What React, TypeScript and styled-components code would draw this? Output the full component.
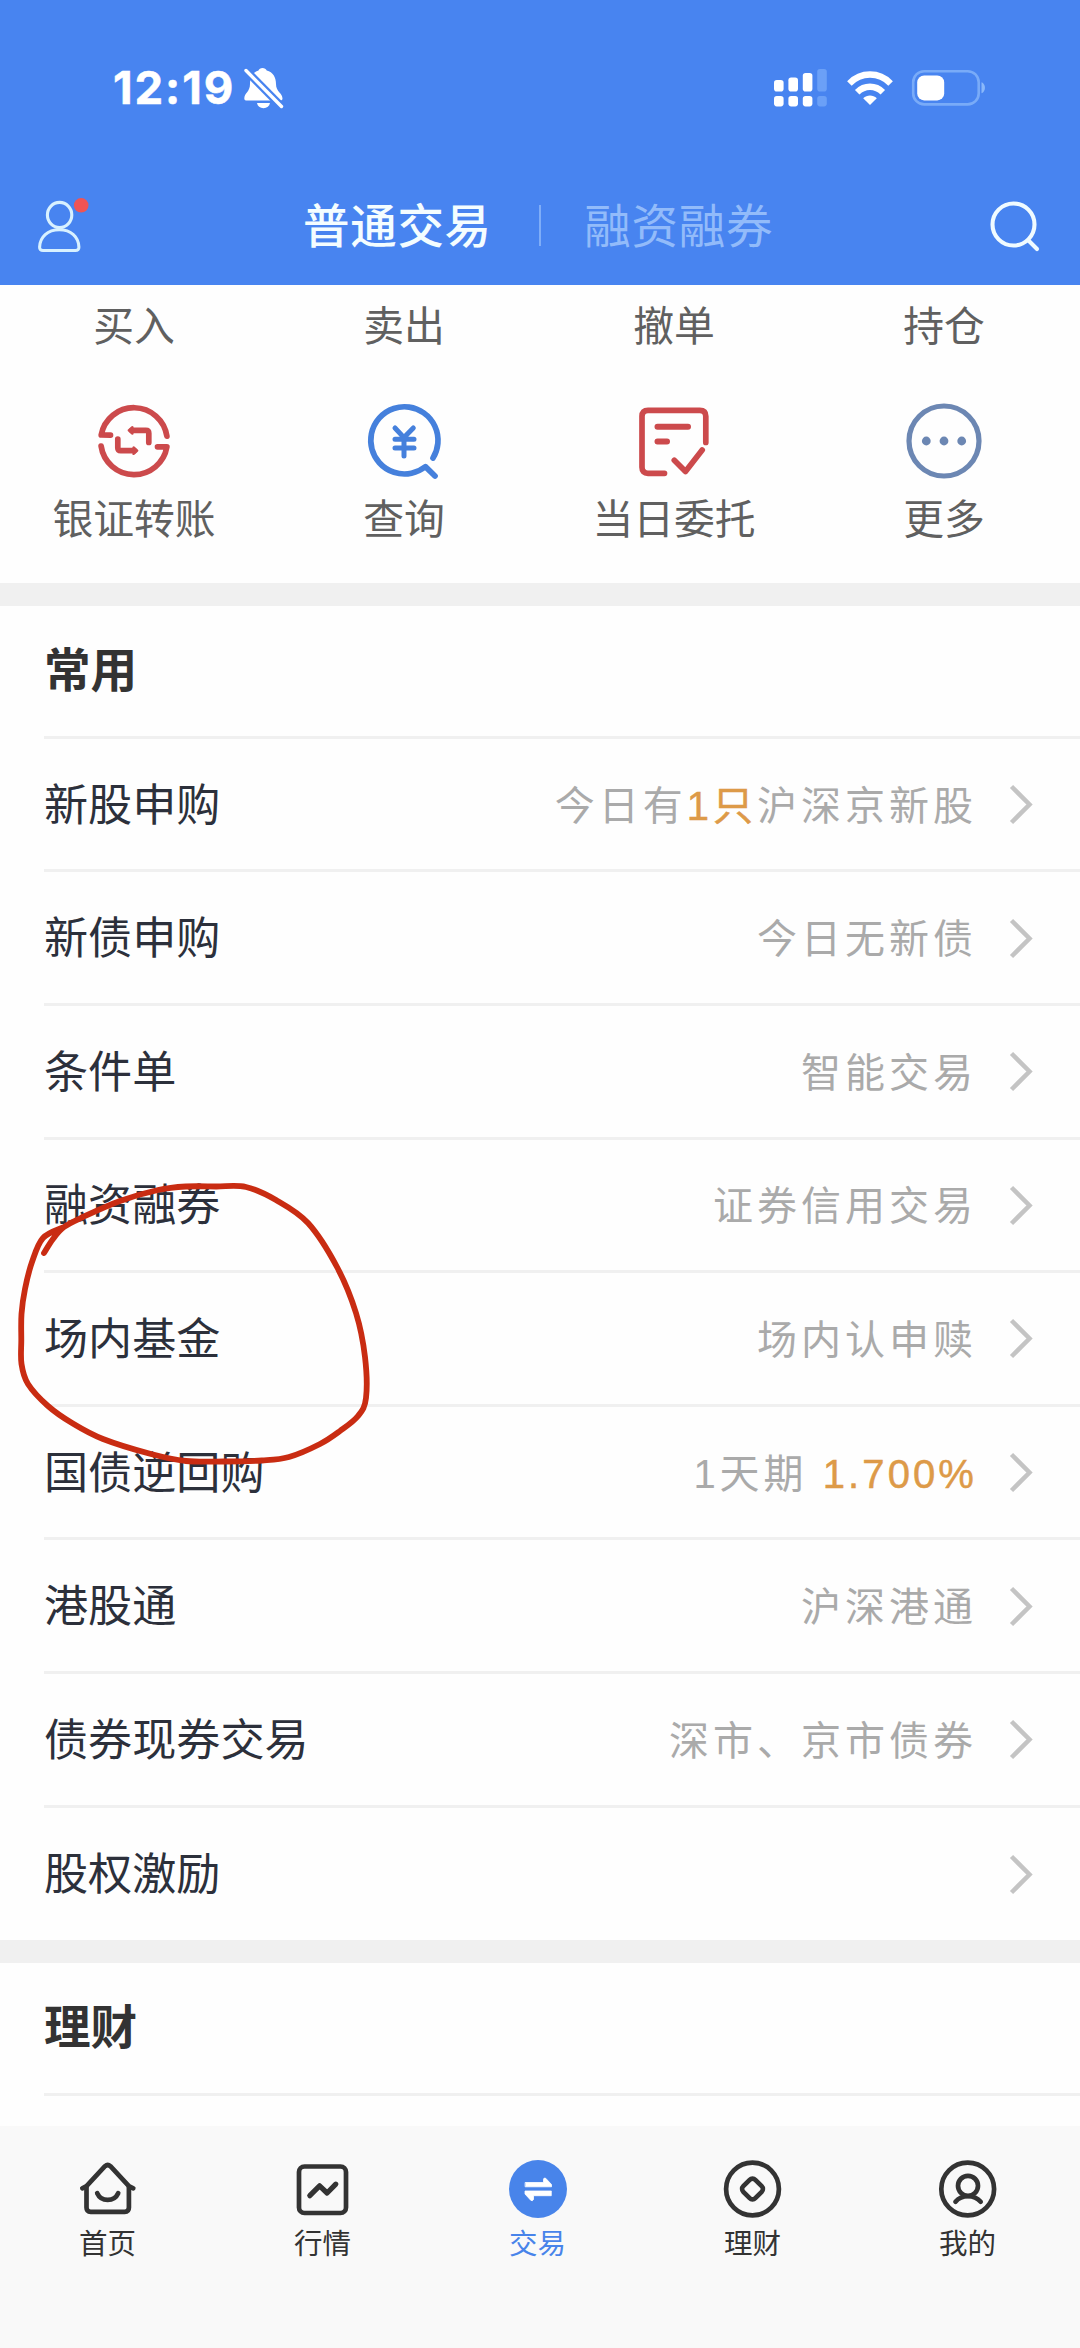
import React from 'react';
import styled, { createGlobalStyle } from 'styled-components';

const Global = createGlobalStyle`
  * { box-sizing: border-box; }
  html, body { margin: 0; padding: 0; background: #fefefe; }
  body {
    font-family: "Liberation Sans", "Noto Sans CJK SC", sans-serif;
    -webkit-font-smoothing: antialiased;
  }
  svg { display: block; flex: none; overflow: visible; }
`;

const Screen = styled.div`
  position: relative;
  width: 1080px;
  height: 2348px;
  display: flex;
  flex-direction: column;
  overflow: hidden;
  background: #fefefe;
`;

const Header = styled.header`
  height: 285px;
  flex: none;
  background: #4884f0;
  color: #fff;
`;

const StatusBar = styled.div`
  height: 168px;
  padding: 8px 95px 0 113px;
  display: flex;
  align-items: center;
  justify-content: space-between;
`;

const StatusGroup = styled.div<{ $gap: number }>`
  display: flex;
  align-items: center;
  gap: ${(p) => p.$gap}px;
`;

const Clock = styled.span`
  width: 121px;
  font-family: Inter, sans-serif;
  font-size: 45.5px;
  font-weight: 700;
  line-height: 54px;
  letter-spacing: 1.9px;
  white-space: nowrap;
  -webkit-text-stroke: 0.5px #fff;
`;

const NavBar = styled.div`
  height: 117px;
  padding: 0 39px 2px 37px;
  display: grid;
  grid-template-columns: 266px 1fr 50px;
  align-items: center;
`;

const Tabs = styled.nav`
  display: flex;
  align-items: center;
`;

const Tab = styled.span<{ $active?: boolean }>`
  font-size: 46.5px;
  line-height: 60px;
  padding-top: 2px;
  letter-spacing: 0.7px;
  font-weight: ${(p) => (p.$active ? 500 : 400)};
  color: ${(p) => (p.$active ? '#f4fdff' : '#92bbfa')};
`;

const TabDivider = styled.i`
  width: 2px;
  height: 41px;
  margin: 0 43px 0 47.5px;
  background: #7fadf8;
`;

const ShortcutGrid = styled.section`
  height: 298px;
  flex: none;
  padding-top: 13px;
  margin-left: -1px;
  display: grid;
  grid-template-columns: repeat(4, 270px);
  grid-template-rows: 58px 1fr;
`;

const Shortcut = styled.div<{ $padTop: number }>`
  padding-top: ${(p) => p.$padTop}px;
  display: flex;
  flex-direction: column;
  align-items: center;
  gap: 12px;
`;

const ShortcutLabel = styled.span`
  font-size: 40.8px;
  line-height: 58px;
  color: #606060;
`;

const SectionGap = styled.div`
  height: 23px;
  flex: none;
  background: #f0f0f0;
`;

const Section = styled.section`
  flex: none;
  padding-left: 44px;
`;

const SectionTitle = styled.h2`
  margin: 0;
  height: 132.8px;
  font-size: 46.6px;
  line-height: 131px;
  font-weight: 700;
  color: #333;
  border-bottom: 3px solid #f0f0f0;
`;

const Row = styled.div<{ $last?: boolean }>`
  height: ${(p) => (p.$last ? 132.8 : 133.6)}px;
  padding-right: 47px;
  display: flex;
  align-items: center;
  border-bottom: ${(p) => (p.$last ? 'none' : '3px solid #f0f0f0')};
`;

const RowTitle = styled.span`
  flex: 1;
  padding-top: 3px;
  font-size: 44.1px;
  line-height: 64px;
  color: #2c303b;
`;

const RowNote = styled.span`
  padding-top: 3px;
  font-size: 40px;
  line-height: 64px;
  letter-spacing: 4px;
  margin-right: 32px;
  color: #aaa;
  white-space: pre;
`;

const Accent = styled.em<{ $tight?: boolean }>`
  font-style: normal;
  letter-spacing: ${(p) => (p.$tight ? 3.1 : 4)}px;
  color: #dd9a48;
  -webkit-text-stroke: 0.5px #dd9a48;
`;

const Filler = styled.div`
  flex: 1;
`;

const TabBar = styled.footer`
  height: 222px;
  flex: none;
  padding-top: 33px;
  background: #f9f9f9;
  display: grid;
  grid-template-columns: repeat(5, 215px);
  align-items: start;
`;

const TabItem = styled.div<{ $active?: boolean }>`
  display: flex;
  flex-direction: column;
  align-items: center;
  gap: 5px;
  color: ${(p) => (p.$active ? '#4884ea' : '#333')};
`;

const TabLabel = styled.span`
  font-size: 28.5px;
  line-height: 40px;
`;

const MarkerLayer = styled.svg`
  position: absolute;
  left: 0;
  top: 1170px;
  pointer-events: none;
`;

const BellOff = () => (
  <svg width="40" height="42" viewBox="0 0 40 42">
    <path d="M18.500 1c2 0 3.600 1 4.200 2.400C29 5 32 10 32 17c0 8 6.500 9 6.500 14.500 0 1.500-1 2-2.500 2H3c-1.800 0-2.700-.6-2.700-2C.3 26 6 25 6 17 6 10 9 5 14.500 3.400 15 2 16.500 1 18.500 1z" fill="#fff" />
    <path d="M13 36h13c-.6 3.400-3 5.200-6.500 5.200S13.600 39.400 13 36z" fill="#fff" />
    <path d="M0 1.500L39 41" stroke="#4884f0" strokeWidth="8" />
    <path d="M2 3.500L37.500 39.500" stroke="#fff" strokeWidth="3.400" strokeLinecap="round" />
  </svg>
);

const bars = [
  { x: 0, y: 11, on: true },
  { x: 14.4, y: 8.5, on: true },
  { x: 28.8, y: 4, on: true },
  { x: 43.2, y: 0, on: false },
];

const Signal = () => (
  <svg width="53" height="38" viewBox="0 0 53 38">
    {bars.map((b) => (
      <g key={b.x} fill={b.on ? '#fff' : '#6ba0f7'}>
        <rect x={b.x} y={b.y} width="9.600" height={22.6 - b.y} rx="2.800" />
        <rect x={b.x} y="27" width="9.600" height="10.400" rx="2.800" />
      </g>
    ))}
  </svg>
);

const Wifi = () => (
  <svg width="46" height="34" viewBox="0 0 46 34">
    <g fill="none" stroke="#fff" strokeWidth="6.400">
      <path d="M2.400 12.400C14 .6 32 .6 43.600 12.400" />
      <path d="M10.200 21.200C17.500 13.900 28.500 13.900 35.800 21.200" />
    </g>
    <path d="M16.200 27.300c4-3.700 9.600-3.700 13.600 0L23 34z" fill="#fff" />
  </svg>
);

const Battery = () => (
  <svg width="73" height="36" viewBox="0 0 73 36">
    <rect x="1.200" y="1.200" width="65.500" height="33.200" rx="11" fill="none" stroke="#79abf8" strokeWidth="2.600" />
    <rect x="5.200" y="5.400" width="27" height="25" rx="7" fill="#fff" />
    <path d="M69.500 12.200c4.600 1.600 4.600 9.400 0 11z" fill="#8ab8fa" />
  </svg>
);

const Profile = () => (
  <svg width="50" height="56" viewBox="0 0 50 56">
    <g fill="none" stroke="#d8f1ff" strokeWidth="3.100">
      <ellipse cx="22.600" cy="17" rx="12.200" ry="12.600" />
      <path d="M6 52.500h32.500c2.200 0 3.500-1.200 3.400-3.400C41.600 39 34 31.800 22.300 31.800S3 39 2.600 49.100c-.1 2.200 1.200 3.400 3.400 3.400z" />
    </g>
    <circle cx="44.200" cy="7.300" r="7.300" fill="#f05454" />
  </svg>
);

const Search = () => (
  <svg width="50" height="50" viewBox="0 0 50 50">
    <g fill="none" stroke="#f0fbff" strokeWidth="4.100" strokeLinecap="round">
      <circle cx="22.500" cy="23.500" r="21" />
      <path d="M37.500 39.500L46 48" />
    </g>
  </svg>
);

const lineIcon = {
  width: 76,
  height: 76,
  viewBox: '0 0 76 76',
  fill: 'none',
  strokeWidth: 5.7,
  strokeLinecap: 'round' as const,
  strokeLinejoin: 'round' as const,
};

const Transfer = () => (
  <svg {...lineIcon} stroke="#cc4a4c">
    <path d="M14.500 32.200L5.200 32A33.300 33.300 0 0 1 70.900 33.200" />
    <path d="M61.500 43.800L70.900 43.800A33.300 33.300 0 0 1 5.100 43" />
    <path d="M52.800 39.500V30.300Q52.800 27.400 49.800 27.400H36" />
    <path d="M21.800 36V44.800Q21.800 47.700 24.800 47.700H38" />
    <path d="M32.800 27.400L36.400 24.200V30.600zM41.200 47.700L37.600 44.500V50.900z" fill="#cc4a4c" strokeWidth="2.400" />
  </svg>
);

const Query = () => (
  <svg {...lineIcon} stroke="#4580dc">
    <path d="M67 55A33.600 33.600 0 1 0 59.400 63.600L69 73" />
    <path d="M29 25L38 34.600L47.300 25M38 34.600V53M29 36.200H48M29 45H48" strokeWidth="5" />
  </svg>
);

const Orders = () => (
  <svg {...lineIcon} stroke="#cc4a4c">
    <path d="M28.500 70.300H12Q6 70.300 6 64.300V13.300Q6 7.300 12 7.300H63.800Q69.800 7.300 69.800 13.300V39.500" />
    <path d="M21.500 23.700H52M21.500 38.500H31" strokeWidth="6" />
    <path d="M38.300 57.200L49.500 68.500L66.200 47" />
  </svg>
);

const More = () => (
  <svg {...lineIcon} stroke="#6c87b3">
    <circle cx="38" cy="38" r="35" strokeWidth="5.200" />
    <g fill="#6c87b3" stroke="none">
      <circle cx="20.300" cy="38" r="4.400" />
      <circle cx="38" cy="38" r="4.400" />
      <circle cx="55.700" cy="38" r="4.400" />
    </g>
  </svg>
);

const Chevron = () => (
  <svg width="24" height="40" viewBox="0 0 24 40">
    <path d="M2.500 2.500L20.500 20.500L2.500 38.500" fill="none" stroke="#c4c4c4" strokeWidth="4.500" />
  </svg>
);

const tabIcon = {
  width: 60,
  height: 60,
  viewBox: '0 0 60 60',
  fill: 'none',
  stroke: 'currentColor',
  strokeWidth: 4.7,
  strokeLinecap: 'round' as const,
  strokeLinejoin: 'round' as const,
};

const HomeIcon = () => (
  <svg {...tabIcon}>
    <path d="M4.300 29.300L8.500 27.200L27 7.200Q29.700 4.700 32.400 7.200L50.900 27.200L55.300 29.300" />
    <path d="M8.500 28V48.500Q8.500 52.800 12.700 52.800H46.700Q50.900 52.800 50.900 48.500V28" />
    <path d="M19.200 34.200C23.200 43 36.200 43 40.200 34.200" />
  </svg>
);

const MarketIcon = () => (
  <svg {...tabIcon}>
    <rect x="6" y="7.500" width="47" height="46.500" rx="5.500" />
    <path d="M16.800 36.700L26.600 26.800L34.100 34L42.800 25.200" strokeWidth="5.200" />
  </svg>
);

const TradeIcon = () => (
  <svg {...tabIcon}>
    <circle cx="30" cy="30" r="29" fill="#4884ea" stroke="none" />
    <path d="M17.500 23.500H35.500V20.200Q36 18.400 37.700 19.300L43.500 25.500V27.800H17.500zM43 36.700H25.500V40.500Q24.500 42.500 22.700 41.200L17 35V32H43z" fill="#fff" stroke="#fff" strokeWidth=".8" />
  </svg>
);

const WealthIcon = () => (
  <svg {...tabIcon}>
    <circle cx="29.500" cy="30" r="26.400" />
    <rect x="21" y="21.500" width="17" height="17" rx="4" transform="rotate(45 29.500 30)" />
  </svg>
);

const MineIcon = () => (
  <svg {...tabIcon}>
    <circle cx="29.700" cy="30" r="26.400" />
    <circle cx="30" cy="26.800" r="10" />
    <path d="M17.500 42.700C23.700 35.400 36.200 35.400 42.700 42.700" />
  </svg>
);

const shortcutTexts = ['买入', '卖出', '撤单', '持仓'];

const shortcuts = [
  { label: '银证转账', Icon: Transfer },
  { label: '查询', Icon: Query },
  { label: '当日委托', Icon: Orders },
  { label: '更多', Icon: More },
];

const rows: { title: string; note?: React.ReactNode }[] = [
  { title: '新股申购', note: <>今日有<Accent>1只</Accent>沪深京新股</> },
  { title: '新债申购', note: '今日无新债' },
  { title: '条件单', note: '智能交易' },
  { title: '融资融券', note: '证券信用交易' },
  { title: '场内基金', note: '场内认申赎' },
  { title: '国债逆回购', note: <>1天期 <Accent $tight>1.700%</Accent></> },
  { title: '港股通', note: '沪深港通' },
  { title: '债券现券交易', note: '深市、京市债券' },
  { title: '股权激励' },
];

const tabs = [
  { label: '首页', Icon: HomeIcon },
  { label: '行情', Icon: MarketIcon },
  { label: '交易', Icon: TradeIcon, active: true },
  { label: '理财', Icon: WealthIcon },
  { label: '我的', Icon: MineIcon },
];

// Hand-drawn marker loop around one of the rows, as points of a smooth curve.
const loop: [number, number][] = [
  [44, 83], [53, 69], [64, 57], [83, 47], [120, 31], [158, 20], [186, 16.5], [216, 16.5], [246, 17],
  [276, 30], [308, 53], [337, 97], [356, 143], [365, 187], [366, 228], [358, 246],
  [340, 261], [320, 274], [289, 287], [262, 290.5], [224, 291.5], [186, 291], [151, 284], [103, 269],
  [72, 253], [48, 236], [28, 214], [21.5, 194], [21.3, 170], [21.5, 144], [25, 119], [32, 92], [43, 68], [64, 57],
];

const smooth = (pts: [number, number][]) =>
  pts.slice(1).reduce((d, p, i) => {
    const a = pts[Math.max(i - 1, 0)];
    const b = pts[i];
    const n = pts[Math.min(i + 2, pts.length - 1)];
    const c1 = [b[0] + (p[0] - a[0]) / 6, b[1] + (p[1] - a[1]) / 6];
    const c2 = [p[0] - (n[0] - b[0]) / 6, p[1] - (n[1] - b[1]) / 6];
    return `${d}C${c1.join(' ')} ${c2.join(' ')} ${p.join(' ')}`;
  }, `M${pts[0].join(' ')}`);

export default function App() {
  return (
    <Screen>
      <Global />
      <Header>
        <StatusBar>
          <StatusGroup $gap={10}>
            <Clock>12:19</Clock>
            <BellOff />
          </StatusGroup>
          <StatusGroup $gap={19.5}>
            <Signal />
            <Wifi />
            <Battery />
          </StatusGroup>
        </StatusBar>
        <NavBar>
          <Profile />
          <Tabs>
            <Tab $active>普通交易</Tab>
            <TabDivider />
            <Tab>融资融券</Tab>
          </Tabs>
          <Search />
        </NavBar>
      </Header>

      <ShortcutGrid>
        {shortcutTexts.map((t) => (
          <Shortcut key={t} $padTop={0}>
            <ShortcutLabel>{t}</ShortcutLabel>
          </Shortcut>
        ))}
        {shortcuts.map(({ label, Icon }) => (
          <Shortcut key={label} $padTop={47}>
            <Icon />
            <ShortcutLabel>{label}</ShortcutLabel>
          </Shortcut>
        ))}
      </ShortcutGrid>

      <SectionGap />
      <Section>
        <SectionTitle>常用</SectionTitle>
        {rows.map((r, i) => (
          <Row key={r.title} $last={i === rows.length - 1}>
            <RowTitle>{r.title}</RowTitle>
            {r.note && <RowNote>{r.note}</RowNote>}
            <Chevron />
          </Row>
        ))}
      </Section>

      <SectionGap />
      <Section>
        <SectionTitle>理财</SectionTitle>
      </Section>
      <Filler />

      <TabBar>
        {tabs.map(({ label, Icon, active }) => (
          <TabItem key={label} $active={active}>
            <Icon />
            <TabLabel>{label}</TabLabel>
          </TabItem>
        ))}
      </TabBar>

      <MarkerLayer width="400" height="310" viewBox="0 0 400 310">
        <path d={smooth(loop)} fill="none" stroke="#c92c12" strokeWidth="5.800" strokeLinecap="round" strokeLinejoin="round" />
      </MarkerLayer>
    </Screen>
  );
}
